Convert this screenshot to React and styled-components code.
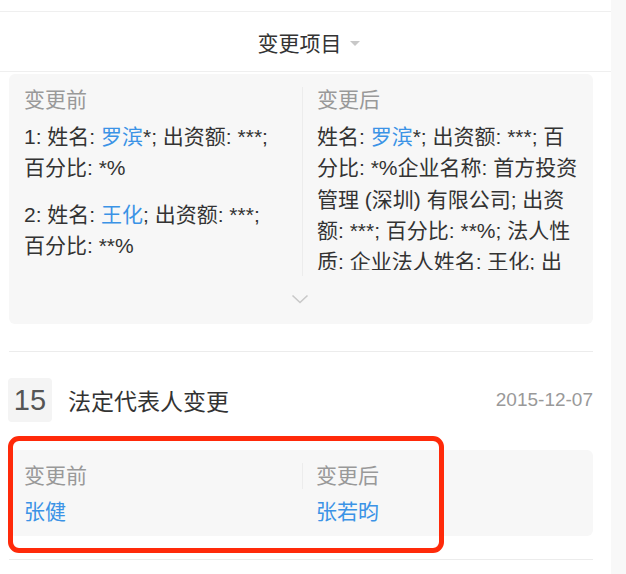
import * as React from 'react'
import styled, { createGlobalStyle } from 'styled-components';

const GlobalStyle = createGlobalStyle`
  body {
    margin: 0;
    background: #fff;
    font-family: "Liberation Sans", "Noto Sans CJK SC", sans-serif;
    color: #333;
  }
`

const changes = [
  {
    before: [
      [['1: 姓名: '], ['罗滨', true], ['*; 出资额: ***; 百分比: *%']],
      [['2: 姓名: '], ['王化', true], ['; 出资额: ***; 百分比: **%']],
    ],
    after: [
      [['姓名: '], ['罗滨', true], ['*; 出资额: ***; 百分比: *%企业名称: 首方投资管理 (深圳) 有限公司; 出资额: ***; 百分比: **%; 法人性质: 企业法人姓名: 王化; 出资额: ***; 百分比: **%']],
    ],
  },
]

const Rich = ({ parts }) => (
  <Para>
    {parts.map(([t, link], i) => link ? <Link key={i}>{t}</Link> : <span key={i}>{t}</span>)}
  </Para>
)

export default class App extends React.Component {
  render() {
    const first = changes[0];
    return (
      <Page>
        <GlobalStyle />
        <Main>
          <TabBar>
            变更项目
            <Caret />
          </TabBar>

          <Card>
            <Column>
              <Label>变更前</Label>
              <Body>
                {first.before.map((p, i) => <Rich key={i} parts={p} />)}
              </Body>
            </Column>
            <Column right>
              <Label>变更后</Label>
              <Body clip>
                {first.after.map((p, i) => <Rich key={i} parts={p} />)}
              </Body>
            </Column>
            <More>
              <svg width="18" height="10" viewBox="0 0 18 10">
                <path d="M1.5 1.5 L9 8.5 L16.5 1.5" fill="none" stroke="#c8c8c8" strokeWidth="1.6" />
              </svg>
            </More>
          </Card>

          <Item>
            <ItemHead>
              <Num>15</Num>
              <Title>法定代表人变更</Title>
              <Date>2015-12-07</Date>
            </ItemHead>
            <Card compact>
              <Column>
                <Label>变更前</Label>
                <Value><Link>张健</Link></Value>
              </Column>
              <Column right short>
                <Label>变更后</Label>
                <Value><Link>张若昀</Link></Value>
              </Column>
            </Card>
            <Mark />
          </Item>
        </Main>
        <Side />
      </Page>
    )
  }
}

const Page = styled.div`
  display: flex;
  width: 626px;
  height: 574px;
  overflow: hidden;
`

const Main = styled.div`
  width: 611px;
  padding-top: 11px;
`

const Side = styled.div`
  width: 15px;
  background: #f8f8f8;
`

const TabBar = styled.div`
  height: 59px;
  border-top: 1px solid #efefef;
  border-bottom: 1px solid #efefef;
  display: flex;
  align-items: center;
  justify-content: center;
  font-size: 21px;
  color: #333;
  padding-left: 6px;
`

const Caret = styled.span`
  display: inline-block;
  margin-left: 8px;
  margin-top: 3px;
  width: 0;
  height: 0;
  border-left: 5px solid transparent;
  border-right: 5px solid transparent;
  border-top: 5px solid #c8c8c8;
`

const Card = styled.div`
  position: relative;
  margin: ${p => p.compact ? '0' : '2px'} 18px 0 9px;
  background: #f7f7f7;
  border-radius: 6px;
  display: grid;
  grid-template-columns: 293px 1fr;
  padding: 13px 0 ${p => p.compact ? '9px' : '48px'};
`

const Column = styled.div`
  padding-left: ${p => p.right ? '14px' : '15px'};
  padding-right: ${p => p.right ? '12px' : '22px'};
  border-left: ${p => p.right ? '1px solid #ececec' : 'none'};
  ${p => p.short && 'border-left: none; background: linear-gradient(#ececec, #ececec) left top / 1px 26px no-repeat;'}
`

const Label = styled.div`
  font-size: 21px;
  line-height: 26px;
  color: #999;
`

const Body = styled.div`
  margin-top: 8px;
  font-size: 21px;
  line-height: 31.3px;
  color: #333;
  ${p => p.clip && 'max-height: 149px; overflow: hidden;'}
`

const Para = styled.p`
  margin: 0 0 15px;
  word-break: break-all;
`

const Link = styled.span`
  color: #3b93e6;
`

const Value = styled.div`
  margin-top: 7px;
  font-size: 21px;
  line-height: 31px;
`

const More = styled.div`
  position: absolute;
  left: 282px;
  bottom: 20px;
  line-height: 0;
`

const Item = styled.div`
  position: relative;
  margin: 27px 18px 0 9px;
  border-top: 1px solid #ececec;
  border-bottom: 1px solid #ececec;
  padding: 26px 0 23px;
  & > ${Card} {
    margin: 28px 0 0;
  }
`

const ItemHead = styled.div`
  display: flex;
  align-items: center;
`

const Num = styled.div`
  width: 44px;
  height: 44px;
  margin-left: -1px;
  border-radius: 4px;
  background: #f4f4f4;
  color: #555;
  font-size: 29px;
  display: flex;
  align-items: center;
  justify-content: center;
`

const Title = styled.div`
  margin-left: 16px;
  font-size: 23px;
  color: #333;
  flex: 1;
`

const Date = styled.div`
  font-size: 19px;
  color: #999;
`

const Mark = styled.div`
  position: absolute;
  left: -1px;
  top: 84px;
  width: 426px;
  height: 107px;
  border: 5px solid #ff2a0a;
  border-radius: 11px;
`
